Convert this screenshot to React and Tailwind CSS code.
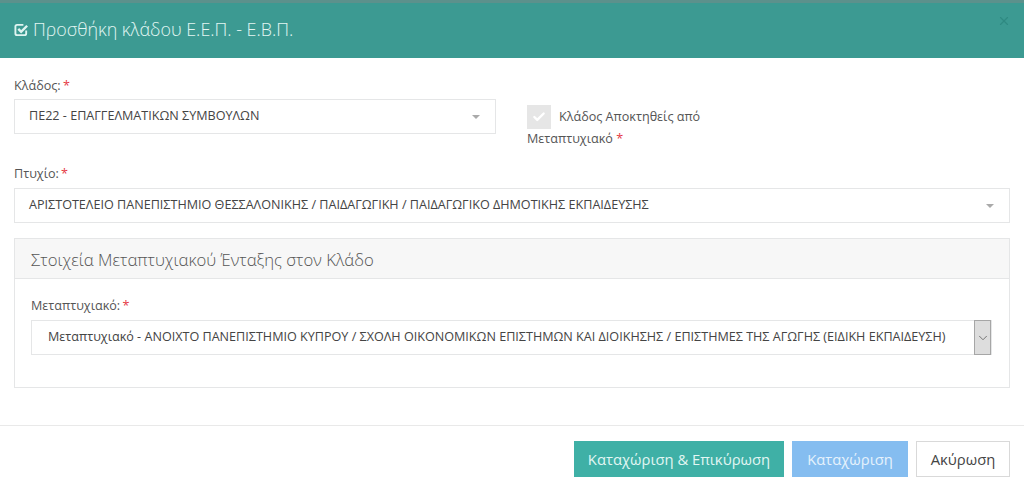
import { Check, X, ChevronDown } from 'lucide-react'

const Req = () => <span className="-ml-[1px] text-[#e53945]">*</span>

const Caret = () => (
  <span className="ml-auto h-0 w-0 border-x-[4px] border-t-[4px] border-x-transparent border-t-[#aaaaaa]" />
)

const Select2 = ({ text }) => (
  <div className="flex h-[35px] items-center border border-[#e5e6e7] pl-[14px] pr-[15px] text-[12.6px] text-[#444444]">
    <span>{text}</span>
    <Caret />
  </div>
)

const App = () => {
  return (
    <div className="h-[493px] w-[1024px] overflow-hidden bg-white font-['Open_Sans',sans-serif] text-[12.6px] text-[#555555]">
      {/* Header */}
      <div className="flex h-[58px] items-center border-t-[3px] border-[#5c918c] bg-[#3c9a92] pl-[14px] pr-[13px] pb-[2px]">
        <svg viewBox="0 0 16 16" className="mr-[4px] h-[15px] w-[15px] text-[#dff4f1]" fill="none" stroke="currentColor">
          <path d="M13 9v3.2a1.8 1.8 0 0 1-1.8 1.8H3.3a1.8 1.8 0 0 1-1.8-1.8V4.8A1.8 1.8 0 0 1 3.3 3H10" strokeWidth="2" />
          <path d="M4.6 7.4l3 3 6.4-6.4" strokeWidth="2.6" />
        </svg>
        <h4 className="text-[17.9px] font-light text-[#e2f6f3]">Προσθήκη κλάδου Ε.Ε.Π. - Ε.Β.Π.</h4>
        <X className="mb-[17px] ml-auto h-[14px] w-[14px] text-[#2f8a82]" strokeWidth={2} />
      </div>

      {/* Body */}
      <div className="px-[14px] pt-[17px]">
        <div className="flex">
          <div className="w-[482px]">
            <label className="block h-[24px] leading-[22px]">Κλάδος: <Req /></label>
            <Select2 text="ΠΕ22 - ΕΠΑΓΓΕΛΜΑΤΙΚΩΝ ΣΥΜΒΟΥΛΩΝ" />
          </div>
          <div className="ml-[31px] w-[200px] pt-[30px] leading-[24px]">
            <div className="flex items-center">
              <span className="flex h-[24px] w-[24px] items-center justify-center bg-[#e6e6e6]">
                <Check className="h-[14px] w-[14px] text-white" strokeWidth={4} />
              </span>
              <span className="ml-[8px]">Κλάδος Αποκτηθείς από</span>
            </div>
            <div className="-mt-[2px]">Μεταπτυχιακό <span className="text-[#e53945]">*</span></div>
          </div>
        </div>

        <div className="mt-[13px]">
          <label className="block h-[24px] leading-[20px]">Πτυχίο: <Req /></label>
          <Select2 text="ΑΡΙΣΤΟΤΕΛΕΙΟ ΠΑΝΕΠΙΣΤΗΜΙΟ ΘΕΣΣΑΛΟΝΙΚΗΣ / ΠΑΙΔΑΓΩΓΙΚΗ / ΠΑΙΔΑΓΩΓΙΚΟ ΔΗΜΟΤΙΚΗΣ ΕΚΠΑΙΔΕΥΣΗΣ" />
        </div>

        {/* Panel */}
        <div className="mt-[15px] h-[150px] border border-[#e5e6e7]">
          <div className="flex h-[40px] items-center border-b border-[#e5e6e7] bg-[#f7f7f7] pl-[16px] pt-[2px] text-[16.7px] font-light text-[#555555]">
            Στοιχεία Μεταπτυχιακού Ένταξης στον Κλάδο
          </div>
          <div className="pl-[16px] pr-[17px] pt-[17px]">
            <label className="block h-[24px] leading-[20px]">Μεταπτυχιακό: <Req /></label>
            <div className="flex h-[35px] items-center border border-[#e5e6e7] pl-[16px] text-[12.6px] text-[#444444]">
              <span>Μεταπτυχιακό - ΑΝΟΙΧΤΟ ΠΑΝΕΠΙΣΤΗΜΙΟ ΚΥΠΡΟΥ / ΣΧΟΛΗ ΟΙΚΟΝΟΜΙΚΩΝ ΕΠΙΣΤΗΜΩΝ ΚΑΙ ΔΙΟΙΚΗΣΗΣ / ΕΠΙΣΤΗΜΕΣ ΤΗΣ ΑΓΩΓΗΣ (ΕΙΔΙΚΗ ΕΚΠΑΙΔΕΥΣΗ)</span>
              <span className="ml-auto flex h-[35px] w-[17px] items-center justify-center border border-[#a6a6a6] bg-[#dddddd]">
                <ChevronDown className="h-[14px] w-[14px] text-[#666666]" strokeWidth={1.5} />
              </span>
            </div>
          </div>
        </div>
      </div>

      {/* Footer */}
      <div className="mt-[37px] flex justify-end gap-[8px] border-t border-[#e9e9e9] pr-[14px] pt-[15px] text-[14.8px]">
        <button className="h-[36px] w-[210px] bg-[#3fb0a6] text-[#e2f6f3]">Καταχώριση &amp; Επικύρωση</button>
        <button className="h-[36px] w-[116px] bg-[#85bdf0] text-[#e6f2fc]">Καταχώριση</button>
        <button className="h-[36px] w-[94px] border border-[#d9d9d9] bg-white text-[#444444]">Ακύρωση</button>
      </div>
    </div>
  )
}

export default App
